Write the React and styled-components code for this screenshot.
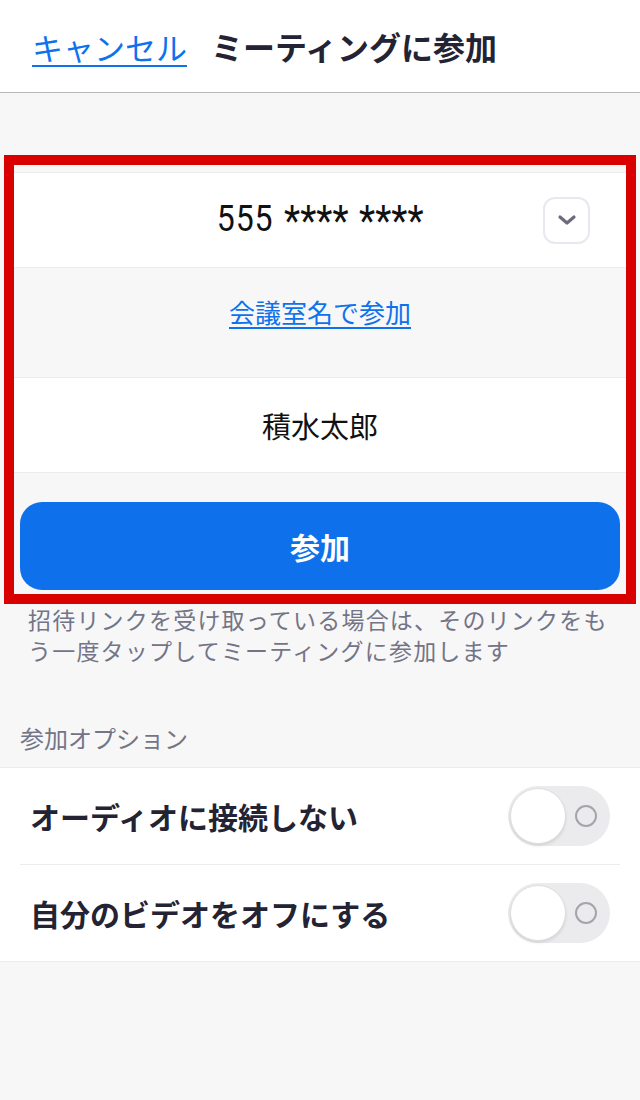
import React, { useState } from 'react'
import styled, { createGlobalStyle } from 'styled-components'

const colors = {
	blue: '#0e72ed',
	text: '#232333',
	muted: '#747487',
	page: '#f7f7f7',
	line: '#ececec',
	red: '#d90000',
}

const GlobalStyle = createGlobalStyle`
	body {
		margin: 0;
		background: ${colors.page};
		font-family: "Noto Sans CJK JP", "Noto Sans", sans-serif;
		color: ${colors.text};
	}
`

const Page = styled.div`
	width: 640px;
	min-height: 1100px;
	background: ${colors.page};
`

const Header = styled.header`
	display: flex;
	align-items: center;
	gap: 24px;
	height: 92px;
	padding: 0 32px;
	background: #fff;
	border-bottom: 1px solid #b8b8b8;
`

const Cancel = styled.a`
	font-size: 31px;
	color: ${colors.blue};
	text-decoration: underline;
	text-underline-offset: 5px;
	text-decoration-thickness: 2px;
	cursor: pointer;
`

const Title = styled.h1`
	margin: 0;
	font-size: 32px;
	font-weight: 700;
	color: ${colors.text};
`

const Highlight = styled.section`
	margin: 62px 4px 0;
	padding-top: 7px;
	border: 10px solid ${colors.red};
	background: ${colors.page};
`

const Row = styled.div`
	display: flex;
	justify-content: center;
	align-items: ${props => (props.top ? 'flex-start' : 'center')};
	height: ${props => props.h}px;
	box-sizing: border-box;
	padding-top: ${props => (props.top ? 26 : 0)}px;
	background: ${props => (props.white ? '#fff' : colors.page)};
	border-top: ${props => (props.white ? `1px solid ${colors.line}` : 'none')};
	border-bottom: ${props => (props.white ? `1px solid ${colors.line}` : 'none')};
`

const NumberRow = styled(Row)`
	display: grid;
	grid-template-columns: 1fr auto 1fr;
	padding: 0 36px;
`

const MeetingId = styled.div`
	grid-column: 2;
	display: inline-block;
	font-family: Roboto, "Noto Sans", sans-serif;
	font-size: 36px;
	letter-spacing: 1px;
	word-spacing: 2px;
	color: #111;
	transform: scaleX(0.89);
	white-space: pre;
`

const Masked = styled.span`
	font-size: 42px;
	letter-spacing: 0;
	vertical-align: -4px;
`

const DropButton = styled.button`
	grid-column: 3;
	justify-self: end;
	display: flex;
	align-items: center;
	justify-content: center;
	width: 47px;
	height: 47px;
	padding: 0;
	background: #fff;
	border: 2px solid #e8e8ef;
	border-radius: 12px;
`

const RoomLink = styled.a`
	font-size: 26px;
	line-height: 36px;
	color: ${colors.blue};
	text-decoration: underline;
	text-underline-offset: 4px;
`

const NameText = styled.div`
	font-size: 29px;
	color: #111;
`

const JoinButton = styled.button`
	display: block;
	width: 600px;
	height: 88px;
	margin: 29px 6px 4px;
	border: none;
	border-radius: 22px;
	background: #0e71eb;
	color: #fff;
	font-family: inherit;
	font-size: 30px;
	font-weight: 700;
`

const Hint = styled.p`
	margin: 0;
	padding: 0 28px;
	font-size: 23px;
	line-height: 31px;
	letter-spacing: 1.2px;
	color: ${colors.muted};
`

const SectionLabel = styled.div`
	padding: 56px 20px 13px;
	font-size: 24px;
	line-height: 32px;
	color: ${colors.muted};
`

const OptionList = styled.div`
	background: #fff;
	border-top: 1px solid ${colors.line};
	border-bottom: 1px solid ${colors.line};
`

const OptionRow = styled.div`
	display: flex;
	align-items: center;
	justify-content: space-between;
	height: 96px;
	margin: 0 20px;
	padding: 0 10px;
	border-bottom: ${props => (props.last ? 'none' : `1px solid ${colors.line}`)};
`

const OptionText = styled.span`
	font-size: 30px;
	font-weight: 700;
	color: ${colors.text};
`

const Track = styled.button`
	display: flex;
	align-items: center;
	width: 102px;
	height: 60px;
	padding: 0 2px;
	border: none;
	border-radius: 30px;
	background: ${props => (props.on ? '#34c759' : '#ebebed')};
	justify-content: ${props => (props.on ? 'flex-end' : 'space-between')};
`

const Knob = styled.span`
	width: 56px;
	height: 56px;
	box-sizing: border-box;
	border-radius: 50%;
	background: #fff;
	border: 1px solid #dedede;
	box-shadow: 0 2px 3px rgba(0, 0, 0, 0.1);
`

const OffMark = styled.span`
	width: 18px;
	height: 18px;
	margin-right: 11px;
	border: 2px solid #a4a4aa;
	border-radius: 50%;
`

function Toggle({ on, onClick }) {
	return (
		<Track on={on ? 1 : 0} onClick={onClick}>
			<Knob />
			{!on && <OffMark />}
		</Track>
	)
}

export default function App() {
	const [audioOff, setAudioOff] = useState(false)
	const [videoOff, setVideoOff] = useState(false)

	return (
		<Page>
			<GlobalStyle />
			<Header>
				<Cancel>キャンセル</Cancel>
				<Title>ミーティングに参加</Title>
			</Header>
			<Highlight>
				<NumberRow white h={96}>
					<MeetingId>
						555 <Masked>****</Masked> <Masked>****</Masked>
					</MeetingId>
					<DropButton>
						<svg width="20" height="12" viewBox="0 0 20 12">
							<path d="M3 3l7 6 7-6" fill="none" stroke="#6b6b7b" strokeWidth="3.2" strokeLinecap="round" strokeLinejoin="round" />
						</svg>
					</DropButton>
				</NumberRow>
				<Row top h={109}>
					<RoomLink>会議室名で参加</RoomLink>
				</Row>
				<Row white h={96}>
					<NameText>積水太郎</NameText>
				</Row>
				<JoinButton>参加</JoinButton>
			</Highlight>
			<Hint>招待リンクを受け取っている場合は、そのリンクをもう一度タップしてミーティングに参加します</Hint>
			<SectionLabel>参加オプション</SectionLabel>
			<OptionList>
				<OptionRow>
					<OptionText>オーディオに接続しない</OptionText>
					<Toggle on={audioOff} onClick={() => setAudioOff(!audioOff)} />
				</OptionRow>
				<OptionRow last>
					<OptionText>自分のビデオをオフにする</OptionText>
					<Toggle on={videoOff} onClick={() => setVideoOff(!videoOff)} />
				</OptionRow>
			</OptionList>
		</Page>
	)
}
